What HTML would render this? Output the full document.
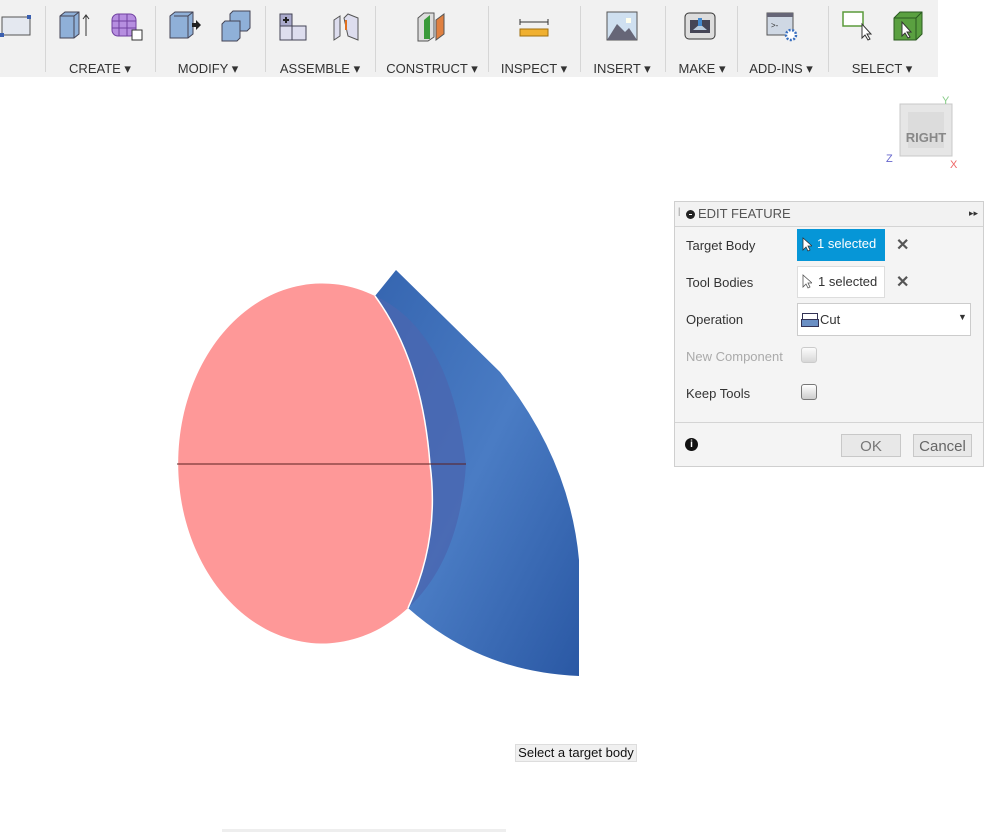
<!DOCTYPE html>
<html><head><style>
body{margin:0;width:984px;height:833px;background:#fff;font-family:"Liberation Sans",Arial,sans-serif;position:relative;overflow:hidden}
.tb{position:absolute;left:0;top:0;width:938px;height:77px;background:#f1f1f1}
.sep{position:absolute;top:6px;width:1px;height:66px;background:#d6d6d6}
.lb{position:absolute;top:61px;font-size:13px;color:#333;transform:translateX(-50%);white-space:nowrap}
.ic{position:absolute;top:10px}
.p{position:absolute;left:674px;top:201px;width:310px;height:266px;background:#f4f4f4;border:1px solid #cfcfcf;box-sizing:border-box}
.t{position:absolute;font-size:13px;color:#333}
.fld{position:absolute;left:122px;width:88px;height:32px;box-sizing:border-box;font-size:13px;line-height:30px;padding-left:20px}
.x{position:absolute;left:221px;font-size:16px;font-weight:bold;color:#555}
.cb{position:absolute;left:126px;width:14px;height:14px;border:1px solid #777;border-radius:3px;background:linear-gradient(#fff,#ccc)}
.btn{position:absolute;top:232px;height:23px;border:1px solid #c8c8c8;background:#e8e8e8;font-size:15px;line-height:23px;text-align:center;color:#666;box-sizing:border-box}
</style></head><body>
<div class="tb">
<svg class="ic" style="left:0;top:13px" width="32" height="28"><rect x="2" y="4" width="28" height="18" fill="#e4e8f0" stroke="#555"/><rect x="0" y="20" width="4" height="4" fill="#3a5fb0"/><rect x="27" y="2" width="4" height="4" fill="#3a5fb0"/></svg>
<div class="sep" style="left:45px"></div>
<svg class="ic" style="left:58px" width="32" height="32"><path d="M2 6l5-4h14v22l-5 4H2z" fill="#8fb0d8" stroke="#445"/><path d="M2 6h14v22M16 6l5-4" stroke="#445" fill="none"/><path d="M28 26V6M25 9l3-4 3 4" stroke="#333" fill="none"/></svg>
<svg class="ic" style="left:110px" width="34" height="32"><rect x="2" y="4" width="24" height="22" rx="6" fill="#b68ee0" stroke="#7040a0"/><path d="M2 11h24M2 18h24M9 4v22M17 4v22" stroke="#7040a0"/><rect x="22" y="20" width="10" height="10" fill="#fff" stroke="#333"/></svg>
<div class="sep" style="left:155px"></div>
<svg class="ic" style="left:168px" width="34" height="32"><path d="M2 6l5-4h18v22l-5 4H2z" fill="#8fb0d8" stroke="#445"/><path d="M6 6h14v22M20 6l5-4" stroke="#445" fill="none"/><path d="M24 13h4v-3l5 5-5 5v-3h-4z" fill="#222"/></svg>
<svg class="ic" style="left:220px" width="32" height="32"><path d="M10 4l3-3h17v17l-3 3H10z" fill="#8fb0d8" stroke="#445"/><path d="M2 14l3-3h15v17l-3 3H2z" fill="#8fb0d8" stroke="#445"/></svg>
<div class="sep" style="left:265px"></div>
<svg class="ic" style="left:278px" width="32" height="32"><rect x="2" y="4" width="12" height="12" fill="#aac" stroke="#445"/><path d="M5 10h6M8 7v6" stroke="#222" stroke-width="2"/><rect x="2" y="16" width="12" height="14" fill="#dde" stroke="#445"/><rect x="14" y="16" width="14" height="14" fill="#dde" stroke="#445"/></svg>
<svg class="ic" style="left:330px" width="32" height="32"><path d="M4 10l6-4v20l-6 4zM14 8l4-4 10 4v22l-10-4z" fill="#dde" stroke="#555"/><path d="M16 10v10" stroke="#e07020" stroke-width="2"/></svg>
<div class="sep" style="left:375px"></div>
<svg class="ic" style="left:416px" width="32" height="32"><path d="M2 8l6-5h10v24l-6 4H2z" fill="#ddd" stroke="#555"/><path d="M8 10l6-5v24l-6 0z" fill="#3a9a3a"/><path d="M20 10l8-6v20l-8 6z" fill="#e08040" stroke="#555"/></svg>
<div class="sep" style="left:488px"></div>
<svg class="ic" style="left:518px" width="32" height="32"><path d="M2 12h28M2 9v6M30 9v6" stroke="#333"/><rect x="2" y="19" width="28" height="7" fill="#f0b030" stroke="#a07010"/></svg>
<div class="sep" style="left:580px"></div>
<svg class="ic" style="left:606px" width="32" height="32"><rect x="1" y="2" width="30" height="28" fill="#cfe0f0" stroke="#555"/><path d="M1 30l10-16 8 8 4-4 8 12z" fill="#667"/><rect x="20" y="8" width="5" height="5" fill="#ffe"/></svg>
<div class="sep" style="left:665px"></div>
<svg class="ic" style="left:684px" width="32" height="32"><rect x="1" y="3" width="30" height="26" rx="4" fill="#ddd" stroke="#333"/><rect x="6" y="10" width="20" height="13" fill="#445"/><path d="M9 20l7-6 7 6z" fill="#bcd"/><rect x="14" y="8" width="4" height="8" fill="#48c"/></svg>
<div class="sep" style="left:737px"></div>
<svg class="ic" style="left:766px" width="34" height="34"><rect x="1" y="3" width="26" height="22" fill="#cfd8e4" stroke="#555"/><rect x="1" y="3" width="26" height="4" fill="#667"/><text x="5" y="18" font-size="8" fill="#333">&gt;-</text><circle cx="25" cy="25" r="5" fill="#fff" stroke="#3a70c0" stroke-width="2.5" stroke-dasharray="2 1.5"/></svg>
<div class="sep" style="left:828px"></div>
<svg class="ic" style="left:840px" width="34" height="34"><rect x="3" y="2" width="20" height="14" fill="#fff" stroke="#5a9a3a" stroke-width="1.5"/><path d="M22 14v14l3-3 3 5 2-1-3-5h4z" fill="#fff" stroke="#333"/></svg>
<svg class="ic" style="left:892px" width="34" height="34"><path d="M2 8l6-6h22v22l-6 6H2z" fill="#5aa040" stroke="#2a5a20"/><path d="M2 8h22v22M24 8l6-6" stroke="#2a5a20" fill="none"/><path d="M10 12v14l3-3 3 5 2-1-3-5h4z" fill="#fff" stroke="#333"/></svg>
<div class="lb" style="left:100px">CREATE ▾</div>
<div class="lb" style="left:208px">MODIFY ▾</div>
<div class="lb" style="left:320px">ASSEMBLE ▾</div>
<div class="lb" style="left:432px">CONSTRUCT ▾</div>
<div class="lb" style="left:534px">INSPECT ▾</div>
<div class="lb" style="left:622px">INSERT ▾</div>
<div class="lb" style="left:702px">MAKE ▾</div>
<div class="lb" style="left:781px">ADD-INS ▾</div>
<div class="lb" style="left:882px">SELECT ▾</div>
</div>

<svg style="position:absolute;left:880px;top:92px" width="104" height="80">
<rect x="20" y="12" width="52" height="52" fill="#e6e6e6" stroke="#c8c8c8"/><rect x="28" y="20" width="36" height="36" fill="#dcdcdc"/>
<text x="46" y="50" font-size="13" font-weight="bold" fill="#888" text-anchor="middle" font-family="Liberation Sans">RIGHT</text>
<text x="62" y="12" font-size="11" fill="#8c8">Y</text><text x="6" y="70" font-size="11" fill="#66c">Z</text><text x="70" y="76" font-size="11" fill="#e66">X</text>
</svg>

<svg style="position:absolute;left:0;top:0" width="984" height="833">
<defs><linearGradient id="g" x1="0" y1="0" x2="1" y2="1"><stop offset="0" stop-color="#3565b0"/><stop offset=".5" stop-color="#4a7cc4"/><stop offset="1" stop-color="#2a58a4"/></linearGradient></defs>
<path d="M396 270 L500 372 Q570 460 579 560 L579 676 Q480 672 408 608 Q440 540 430 464 Q422 360 375 296 Z" fill="url(#g)"/>
<path d="M375 296 Q450 330 466 464 Q460 560 408 608 Q440 540 430 464 Q422 360 375 296Z" fill="#4a66b0" opacity=".8"/>
<path d="M375 296 A144 180 0 1 0 408 608 Q440 540 430 464 Q422 360 375 296Z" fill="#fe9898"/>
<path d="M375 296 Q422 360 430 464 Q440 540 408 608" fill="none" stroke="#fff" stroke-width="1.5"/>
<path d="M177 464H466" stroke="#5a2020" stroke-width="1"/>
<rect x="222" y="829" width="284" height="3" fill="#eee"/>
</svg>

<div style="position:absolute;left:515px;top:744px;width:122px;height:18px;background:#f0f0f0;border:1px solid #ddd;box-sizing:border-box;font-size:13px;line-height:16px;text-align:center;color:#111">Select a target body</div>

<div class="p">
<div style="position:absolute;left:0;top:0;right:0;height:24px;border-bottom:1px solid #d4d4d4;background:#f2f2f2"></div>
<div class="t" style="left:3px;top:4px;font-size:9px;color:#888">|</div>
<div style="position:absolute;left:11px;top:8px;width:9px;height:9px;border-radius:50%;background:#222"></div>
<div style="position:absolute;left:14px;top:12px;width:3px;height:1px;background:#fff"></div>
<div class="t" style="left:23px;top:4px;color:#555">EDIT FEATURE</div>
<div class="t" style="left:294px;top:6px;font-size:9px;color:#333">▸▸</div>
<div class="t" style="left:11px;top:36px">Target Body</div>
<div class="fld" style="top:27px;background:#0696d7;color:#fff">1 selected</div>
<svg style="position:absolute;left:127px;top:35px" width="10" height="15"><path d="M1 1v12l3-3 2 4 2-1-2-4h4z" fill="#fff" stroke="#333" stroke-width=".8"/></svg>
<div class="x" style="top:33px">✕</div>
<div class="t" style="left:11px;top:73px">Tool Bodies</div>
<div class="fld" style="top:64px;background:#fff;border:1px solid #ddd;color:#333">1 selected</div>
<svg style="position:absolute;left:127px;top:72px" width="10" height="15"><path d="M1 1v12l3-3 2 4 2-1-2-4h4z" fill="#fff" stroke="#555" stroke-width=".8"/></svg>
<div class="x" style="top:70px">✕</div>
<div class="t" style="left:11px;top:110px">Operation</div>
<div style="position:absolute;left:122px;top:101px;width:174px;height:33px;background:#fff;border:1px solid #ccc;box-sizing:border-box"></div>
<div style="position:absolute;left:127px;top:111px;width:14px;height:6px;background:#fff;border:1px solid #335"></div>
<div style="position:absolute;left:126px;top:117px;width:16px;height:6px;background:#6a8fc4;border:1px solid #335"></div>
<div class="t" style="left:145px;top:110px">Cut</div>
<div class="t" style="left:283px;top:110px;font-size:9px">▼</div>
<div class="t" style="left:11px;top:147px;color:#aaa">New Component</div>
<div class="cb" style="top:145px;border-color:#bbb;opacity:.7"></div>
<div class="t" style="left:11px;top:184px">Keep Tools</div>
<div class="cb" style="top:182px"></div>
<div style="position:absolute;left:0;right:0;top:220px;height:1px;background:#d4d4d4"></div>
<div style="position:absolute;left:10px;top:236px;width:13px;height:13px;border-radius:50%;background:#111;color:#fff;font-size:10px;font-weight:bold;text-align:center;line-height:13px">i</div>
<div class="btn" style="left:166px;width:60px;color:#777">OK</div>
<div class="btn" style="left:238px;width:59px">Cancel</div>
</div>
</body></html>
